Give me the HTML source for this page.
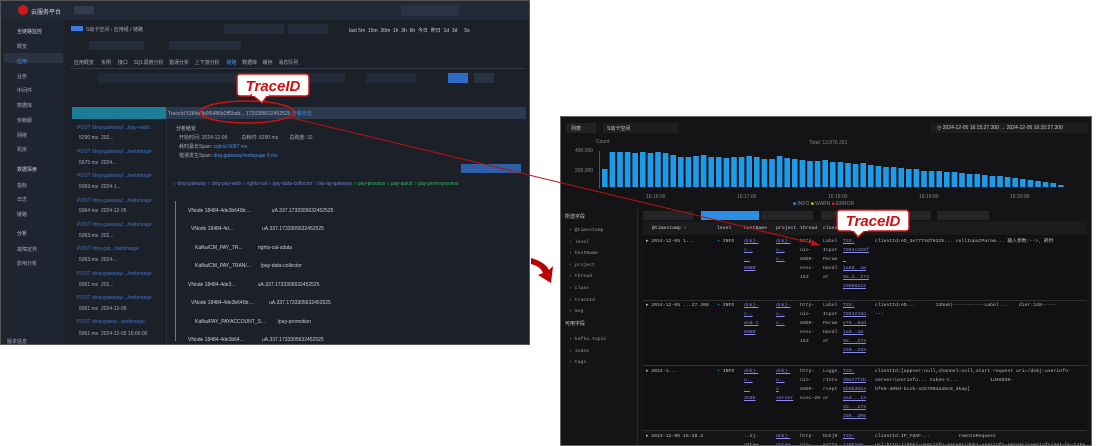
<!DOCTYPE html>
<html><head><meta charset="utf-8"><style>
*{margin:0;padding:0;box-sizing:border-box}
body{width:1098px;height:438px;background:#fff;position:relative;overflow:hidden;font-family:"Liberation Sans","Noto Sans CJK SC",sans-serif;font-size:5px;color:#aab}
.a{position:absolute}
.t{position:absolute;white-space:nowrap}
.m{font-family:"Liberation Mono","Noto Sans CJK SC",monospace;font-size:4.8px;line-height:9px}
.lk{color:#8a8ae8;text-decoration:underline}
</style></head><body>
<!-- LEFT SCREENSHOT -->
<div class="a" style="left:0;top:0;width:530px;height:345px;background:#1b2029;border:1px solid #555;overflow:hidden">
 <div class="a" style="left:0;top:0;width:530px;height:19px;background:#222a38"></div>
 <div class="a" style="left:17px;top:4px;width:10px;height:10px;border-radius:50%;background:#d01818"></div>
 <div class="t" style="left:30px;top:6px;color:#ddd;font-size:6px">云服务平台</div>
 <div class="a" style="left:73px;top:5px;width:20px;height:8px;background:#333c4c;border-radius:2px"></div>
 <div class="a" style="left:400px;top:4px;width:58px;height:11px;background:#2b3342"></div>
 <div class="a" style="left:0;top:19px;width:64px;height:326px;background:#1f2530"></div>
 <div class="a" style="left:3px;top:52px;width:59px;height:10px;background:#2a3342"></div>
 <div class="t" style="left:16px;top:27px;color:#ccd">全链路监控</div>
 <div class="t" style="left:16px;top:42px">概览</div><div class="t" style="left:16px;top:57px;color:#4a90e2">应用</div>
 <div class="t" style="left:16px;top:72px">业务</div><div class="t" style="left:16px;top:86px">中间件</div>
 <div class="t" style="left:16px;top:101px">数据库</div><div class="t" style="left:16px;top:116px">依赖服</div>
 <div class="t" style="left:16px;top:131px">网络</div><div class="t" style="left:16px;top:145px">机房</div>
 <div class="t" style="left:16px;top:165px;color:#ccd">数据探索</div>
 <div class="t" style="left:16px;top:181px">指标</div><div class="t" style="left:16px;top:195px">日志</div><div class="t" style="left:16px;top:210px">链路</div>
 <div class="t" style="left:16px;top:229px;color:#ccd">分析</div>
 <div class="t" style="left:16px;top:245px">故障定界</div><div class="t" style="left:16px;top:259px">影响分析</div>
 <div class="t" style="left:6px;top:337px">版本信息</div>
 <div class="a" style="left:70px;top:25px;width:12px;height:5px;background:#3a7be0"></div>
 <div class="t" style="left:85px;top:25px">S动卡空间 › 应用组 / 链路</div>
 <div class="a" style="left:223px;top:23px;width:60px;height:10px;background:#252c3a"></div>
 <div class="a" style="left:287px;top:23px;width:40px;height:10px;background:#252c3a"></div>
 <div class="t" style="left:348px;top:26px;color:#ccd">last 5m &nbsp;15m &nbsp;30m &nbsp;1h &nbsp;3h &nbsp;6h &nbsp;今日 &nbsp;昨日 &nbsp;1d &nbsp;3d &nbsp;&nbsp;&nbsp; 5s</div>
 <div class="a" style="left:88px;top:40px;width:55px;height:9px;background:#252c3a"></div>
 <div class="a" style="left:168px;top:40px;width:72px;height:9px;background:#252c3a"></div>
 <div class="t" style="left:73px;top:58px">应用概览 &nbsp;&nbsp;&nbsp;&nbsp;实例 &nbsp;&nbsp;&nbsp;&nbsp;接口 &nbsp;&nbsp;&nbsp;SQL调用分析 &nbsp;&nbsp;&nbsp;错误分析 &nbsp;&nbsp;&nbsp;上下游分析 &nbsp;&nbsp;&nbsp;&nbsp;<span style="color:#4a90e2">链路</span> &nbsp;&nbsp;&nbsp;数据库 &nbsp;&nbsp;&nbsp;缓存 &nbsp;&nbsp;&nbsp;消息队列</div>
 <div class="a" style="left:69px;top:67px;width:455px;height:1px;background:#333b4a"></div>
 <div class="a" style="left:97px;top:72px;width:247px;height:10px;background:#232a37"></div>
 <div class="a" style="left:365px;top:72px;width:50px;height:10px;background:#232a37"></div>
 <div class="a" style="left:447px;top:72px;width:20px;height:10px;background:#2e6cc8"></div>
 <div class="a" style="left:473px;top:72px;width:20px;height:10px;background:#2a3140"></div>
 <div class="a" style="left:71px;top:106px;width:94px;height:12px;background:#1e7c98"></div>
 <div class="a" style="left:165px;top:106px;width:360px;height:12px;background:#2b3a4e"></div>
 <div class="t" style="left:167px;top:109px">TraceId 5384a0b0f5486b2ff5bab... 1733305632452525 <span style="color:#4a90e2">查看日志</span></div>
 <div class="a" style="left:165px;top:118px;width:1px;height:227px;background:#2a313e"></div>
 <div class="t" style="left:175px;top:124px;color:#ccd">分析结论</div>
 <div class="t" style="left:178px;top:133px">开始时间: 2024-12-05 &nbsp;&nbsp;&nbsp;&nbsp;&nbsp;&nbsp;&nbsp;&nbsp;&nbsp;总耗时: 5290 ms &nbsp;&nbsp;&nbsp;&nbsp;&nbsp;&nbsp;&nbsp;总跨度: 32</div>
 <div class="t" style="left:178px;top:142px">耗时最长Span: <span style="color:#4a90e2">sqlrxd 5087 ms</span></div>
 <div class="t" style="left:178px;top:151px">错误发生Span: <span style="color:#4a90e2">dnq-gateway/redispage 0 ms</span></div>
 <div class="a" style="left:460px;top:163px;width:60px;height:9px;background:#2d5fa6"></div>
 <div class="t" style="left:172px;top:180px;color:#6a7fd0">○ dnq-gateway ○ dnq-pay-web ○ rights-cal ○ pay-data-collector ○ bis-ap-gateway <span style="color:#37b865">○ pay-process ○ pay-quick ○ pay-prom-process</span></div>
 <div class="t" style="left:187px;top:207px;color:#ccd">VNode 18484-4de3b640b:... &nbsp;&nbsp;&nbsp;&nbsp;&nbsp;&nbsp;&nbsp;&nbsp;&nbsp;&nbsp;&nbsp;&nbsp;&nbsp;&nbsp;uA.337.1733305632452525</div>
 <div class="t" style="left:190px;top:225px;color:#ccd">VNode 18484-4d... &nbsp;&nbsp;&nbsp;&nbsp;&nbsp;&nbsp;&nbsp;&nbsp;&nbsp;&nbsp;&nbsp;&nbsp;&nbsp;&nbsp;&nbsp;&nbsp;&nbsp;&nbsp;&nbsp;&nbsp;uA.337.1733305632452525</div>
 <div class="t" style="left:194px;top:244px;color:#ccd">Kafka/CM_PAY_TR... &nbsp;&nbsp;&nbsp;&nbsp;&nbsp;&nbsp;&nbsp;&nbsp;&nbsp;&nbsp;rights-cal-sdata</div>
 <div class="t" style="left:194px;top:262px;color:#ccd">Kafka/CM_PAY_TRAN/... &nbsp;&nbsp;&nbsp;&nbsp;&nbsp;&nbsp;/pay-data-collector</div>
 <div class="t" style="left:187px;top:281px;color:#ccd">VNode 18484-4de3... &nbsp;&nbsp;&nbsp;&nbsp;&nbsp;&nbsp;&nbsp;&nbsp;&nbsp;&nbsp;&nbsp;&nbsp;&nbsp;&nbsp;&nbsp;uA.337.1733305632452525</div>
 <div class="t" style="left:190px;top:299px;color:#ccd">VNode 18484-4de3b640b:... &nbsp;&nbsp;&nbsp;&nbsp;&nbsp;&nbsp;&nbsp;&nbsp;&nbsp;&nbsp;uA.337.1733305632452525</div>
 <div class="t" style="left:194px;top:318px;color:#ccd">Kafka/PAY_PAYACCOUNT_S... &nbsp;&nbsp;&nbsp;&nbsp;&nbsp;&nbsp;&nbsp;&nbsp;/pay-promotion</div>
 <div class="t" style="left:187px;top:336px;color:#ccd">VNode 18484-4de3b64... &nbsp;&nbsp;&nbsp;&nbsp;&nbsp;&nbsp;&nbsp;&nbsp;&nbsp;&nbsp;&nbsp;&nbsp;uA.337.1733305632452525</div>
 <div class="a" style="left:174px;top:200px;width:4px;height:140px;border-left:1px solid #5f7ba8"></div>
 <div class="t" style="left:76px;top:124px;color:#3f74c8">POST /dnq-gateway/.../pay-web/...</div><div class="t" style="left:78px;top:134px">5290 ms &nbsp;202...</div>
 <div class="t" style="left:76px;top:148px;color:#3f74c8">POST /dnq-gateway/.../webimage</div><div class="t" style="left:78px;top:159px">5675 ms &nbsp;2024...</div>
 <div class="t" style="left:76px;top:172px;color:#3f74c8">POST /dnq-gateway/.../webimage</div><div class="t" style="left:78px;top:183px">5069 ms &nbsp;2024-1...</div>
 <div class="t" style="left:76px;top:197px;color:#3f74c8">POST /dnq-gateway/.../webimage</div><div class="t" style="left:78px;top:207px">5064 ms &nbsp;2024-12-05</div>
 <div class="t" style="left:76px;top:221px;color:#3f74c8">POST /dnq-gateway/.../webimage</div><div class="t" style="left:78px;top:232px">5063 ms &nbsp;202...</div>
 <div class="t" style="left:76px;top:245px;color:#3f74c8">POST /dnq-gat.../webimage</div><div class="t" style="left:78px;top:256px">5063 ms &nbsp;2024-...</div>
 <div class="t" style="left:76px;top:270px;color:#3f74c8">POST /dnq-gateway/.../webimage</div><div class="t" style="left:78px;top:281px">5061 ms &nbsp;202...</div>
 <div class="t" style="left:76px;top:294px;color:#3f74c8">POST /dnq-gateway/.../webimage</div><div class="t" style="left:78px;top:305px">5061 ms &nbsp;2024-12-05</div>
 <div class="t" style="left:76px;top:318px;color:#3f74c8">POST /dnq-gatew.../webimage</div><div class="t" style="left:78px;top:330px">5061 ms &nbsp;2024-12-05 16:00:00</div>
</div>
<!-- RIGHT SCREENSHOT -->
<div class="a" style="left:560px;top:116px;width:532px;height:330px;background:#141416;border:1px solid #666;overflow:hidden">
 <div class="a" style="left:5px;top:6px;width:30px;height:10px;background:#222"></div>
 <div class="a" style="left:42px;top:6px;width:75px;height:10px;background:#1e1e20"></div>
 <div class="t" style="left:10px;top:8px;color:#ccc">列表</div><div class="t" style="left:46px;top:8px;color:#ccc">S动卡空间</div>
 <div class="a" style="left:370px;top:6px;width:158px;height:10px;background:#1e1e20"></div>
 <div class="t" style="left:376px;top:8px;color:#ccc">◷ 2024-12-05 16:15:27.300 → 2024-12-05 16:20:27.300</div>
 <div class="t" style="left:35px;top:22px;color:#888">Count</div><div class="t" style="left:248px;top:23px;color:#888">Total: 13,876,331</div>
 <div class="t" style="left:14px;top:31px;color:#888">400,000</div><div class="t" style="left:14px;top:51px;color:#888">200,000</div>
 <div class="a" style="left:38px;top:34px;width:1px;height:37px;background:#555"></div>
 <svg class="a" style="left:40px;top:24px" width="470" height="47" viewBox="0 0 470 47">
  <g fill="#1e9be8" id="b"></g>
 </svg>
 <div class="t" style="left:85px;top:77px;color:#888">16:16:00</div>
 <div class="t" style="left:176px;top:77px;color:#888">16:17:00</div>
 <div class="t" style="left:267px;top:77px;color:#888">16:18:00</div>
 <div class="t" style="left:358px;top:77px;color:#888">16:19:00</div>
 <div class="t" style="left:449px;top:77px;color:#888">16:20:00</div>
 <div class="t" style="left:232px;top:84px;color:#888"><span style="color:#1e9be8">■</span> INFO <span style="color:#f0c000">■</span> WARN <span style="color:#e02020">■</span> ERROR</div>
 <div class="t" style="left:4px;top:96px;color:#ccc">所选字段</div>
 <div class="a" style="left:82px;top:94px;width:50px;height:9px;background:#252528"></div>
 <div class="a" style="left:140px;top:94px;width:58px;height:9px;background:#2a8ee6"></div>
 <div class="a" style="left:200px;top:94px;width:52px;height:9px;background:#252528"></div>
 <div class="a" style="left:260px;top:94px;width:52px;height:9px;background:#252528"></div>
 <div class="a" style="left:318px;top:94px;width:52px;height:9px;background:#252528"></div>
 <div class="a" style="left:376px;top:94px;width:52px;height:9px;background:#252528"></div>
 <div class="a" style="left:82px;top:104px;width:444px;height:14px;background:#1b1b1d"></div>
 <div class="t m" style="left:91px;top:107px;color:#ccc">@timestamp ↕</div>
 <div class="t m" style="left:156px;top:107px;color:#ccc">level</div>
 <div class="t m" style="left:183px;top:107px;color:#ccc">hostName</div>
 <div class="t m" style="left:215px;top:107px;color:#ccc">project</div>
 <div class="t m" style="left:239px;top:107px;color:#ccc">thread</div>
 <div class="t m" style="left:262px;top:107px;color:#ccc">class</div>
 <div class="a" style="left:82px;top:118px;width:444px;height:66px;background:#111113;border-bottom:1px solid #333"></div>
 <div class="a" style="left:82px;top:184px;width:444px;height:65px;background:#111113;border-bottom:1px solid #333"></div>
 <div class="a" style="left:82px;top:249px;width:444px;height:65px;background:#111113;border-bottom:1px solid #333"></div>
 <div style="color:#bbb">
 <div class="t m" style="left:85px;top:120px">▸ 2024-12-05 1...</div>
 <div class="t m" style="left:85px;top:184px">▸ 2024-12-05 ...27.300</div>
 <div class="t m" style="left:85px;top:250px">▸ 2024-1...</div>
 <div class="t m" style="left:85px;top:315px">▸ 2024-12-05 16:20.2</div>
 <div class="t m" style="left:156px;top:120px"><span style="color:#1e9be8">•</span> INFO</div>
 <div class="t m" style="left:156px;top:184px"><span style="color:#1e9be8">•</span> INFO</div>
 <div class="t m" style="left:156px;top:250px"><span style="color:#1e9be8">•</span> INFO</div>
 <div class="a m" style="left:314px;top:120px;width:210px;overflow:hidden;white-space:nowrap">clientId:AD_3e7773d79325... cellInputParam... 输入参数:-->, 耗时</div>
 <div class="a m" style="left:314px;top:184px;width:210px;overflow:hidden;white-space:nowrap">clientId:AD... &nbsp;&nbsp;&nbsp;&nbsp;&nbsp;&nbsp;13ba0|-----------Label... &nbsp;&nbsp;&nbsp;dier:1d8-----<br>---</div>
 <div class="a m" style="left:314px;top:250px;width:210px;overflow:hidden;white-space:nowrap">clientId:[appver:null,channel:null,start request uri=/dnkj-userinfo-<br>server/userinfo... token-c... &nbsp;&nbsp;&nbsp;&nbsp;&nbsp;&nbsp;&nbsp;&nbsp;&nbsp;&nbsp;1d46939-<br>bfe5-409d-bccb-4337904a38c9_dkap]</div>
 <div class="a m" style="left:314px;top:315px;width:210px;overflow:hidden;white-space:nowrap">clientId:IP_F8AF... &nbsp;&nbsp;&nbsp;&nbsp;&nbsp;&nbsp;&nbsp;&nbsp;&nbsp;remoteRequest<br>url:http://dnkj-userinfo-server/dnkj-userinfo-server/userinfo/get-by-token-cache</div>
 </div>
 <div class="t m" style="left:239px;top:120px;color:#aaa">http-<br>nio-<br>8080-<br>exec-<br>163</div>
 <div class="t m" style="left:262px;top:120px;color:#aaa">Label<br>Input<br>Param<br>Handl<br>er</div>
 <div class="t m" style="left:239px;top:184px;color:#aaa">http-<br>nio-<br>8080-<br>exec-<br>163</div>
 <div class="t m" style="left:262px;top:184px;color:#aaa">Label<br>Input<br>Param<br>Handl<br>er</div>
 <div class="t m" style="left:239px;top:250px;color:#aaa">http-<br>nio-<br>8080-<br>exec-28</div>
 <div class="t m" style="left:262px;top:250px;color:#aaa">Logge<br>rInte<br>rcept<br>or</div>
 <div class="t m" style="left:239px;top:315px;color:#aaa">http-<br>nio-</div>
 <div class="t m" style="left:262px;top:315px;color:#aaa">DnkjR<br>estTe</div>
 <div class="t m lk" style="left:282px;top:120px">T33:<br>7954c1b8f<br>&nbsp;<br>1a9d..a8<br>9a.2..273<br>33068222</div>
 <div class="t m lk" style="left:282px;top:184px">T33:<br>7954218d<br>e79..8ad<br>1a9..a8<br>9a...273<br>330..293</div>
 <div class="t m lk" style="left:282px;top:250px">T33:<br>39a77f2b<br>8b9b3bb3<br>4ad...13<br>33...273<br>336..208</div>
 <div class="t m lk" style="left:282px;top:315px">T33:<br>1a0b2e5</div>
 <div class="t m lk" style="left:183px;top:120px">dnkj-<br>c..<br>..<br>8080</div>
 <div class="t m lk" style="left:215px;top:120px">dnkj-<br>u..<br>x..</div>
 <div class="t m lk" style="left:183px;top:184px">dnkj-<br>c..<br>an8.1<br>8080</div>
 <div class="t m lk" style="left:215px;top:184px">dnkj-<br>u..<br>x..</div>
 <div class="t m lk" style="left:183px;top:250px">dnkj-<br>u..<br>..<br>3n8b</div>
 <div class="t m lk" style="left:215px;top:250px">dnkj-<br>u..<br>x<br>server</div>
 <div class="t m" style="left:183px;top:315px;color:#aaa">..kj-<br>gatew</div>
 <div class="t m lk" style="left:215px;top:315px">dnkj-<br>gatew</div>
 <div class="t m" style="left:8px;top:108px;color:#999;line-height:11.6px">› @timestamp<br>› level<br>› hostName<br>› project<br>› thread<br>› class<br>› traceId<br>› msg</div>
 <div class="t" style="left:4px;top:203px;color:#ccc">可用字段</div>
 <div class="t m" style="left:8px;top:217px;color:#999;line-height:11.6px">› kafka.topic<br>› index<br>› tags</div>
 <div class="a" style="left:76px;top:92px;width:1px;height:240px;background:#2a2a2c"></div>
</div>
<script>
var h=[18,35,35,35,34,35,34,35,34,32,30,30,31,32,30,30,29,30,30,31,30,28,28,31,29,28,27,26,26,27,25,25,24,23,24,22,21,20,20,19,18,18,16,16,16,15,15,14,13,13,12,11,11,10,9,8,7,6,5,4,2];
var g=document.getElementById('b'),s='';
for(var i=0;i<h.length;i++){s+='<rect x="'+(i*7.6+1)+'" y="'+(46-h[i])+'" width="5.6" height="'+h[i]+'"/>';}
g.innerHTML=s;
</script>
<svg class="a" style="left:0;top:0" width="1098" height="438">
 <ellipse cx="247" cy="112" rx="47" ry="11" fill="none" stroke="#d01010" stroke-width="1.5"/>
 <line x1="292" y1="118" x2="820" y2="245" stroke="#c01010" stroke-width="1"/>
 <polygon points="820,245 812,240 811,246" fill="#c01010"/>
 <path d="M531,258 Q545,262 549,270 L553,266 L551,283 L538,275 L543,273 Q540,266 531,264Z" fill="#b00"/>
 <rect x="237" y="74" width="72" height="22" rx="3" fill="#fff" stroke="#d01010" stroke-width="1.5"/>
 <polygon points="252,95 262,103 268,95" fill="#fff" stroke="#d01010" stroke-width="1.5"/>
 <rect x="252" y="93" width="17" height="3" fill="#fff"/>
 <text x="273" y="91" text-anchor="middle" font-family="Liberation Sans" font-weight="bold" font-style="italic" font-size="15" fill="#d01010">TraceID</text>
 <rect x="837" y="210" width="72" height="21" rx="3" fill="#fff" stroke="#d01010" stroke-width="1.5"/>
 <polygon points="852,230 858,237 866,230" fill="#fff" stroke="#d01010" stroke-width="1.5"/>
 <rect x="851" y="228" width="17" height="3" fill="#fff"/>
 <text x="873" y="226" text-anchor="middle" font-family="Liberation Sans" font-weight="bold" font-style="italic" font-size="15" fill="#d01010">TraceID</text>
</svg>
</body></html>
